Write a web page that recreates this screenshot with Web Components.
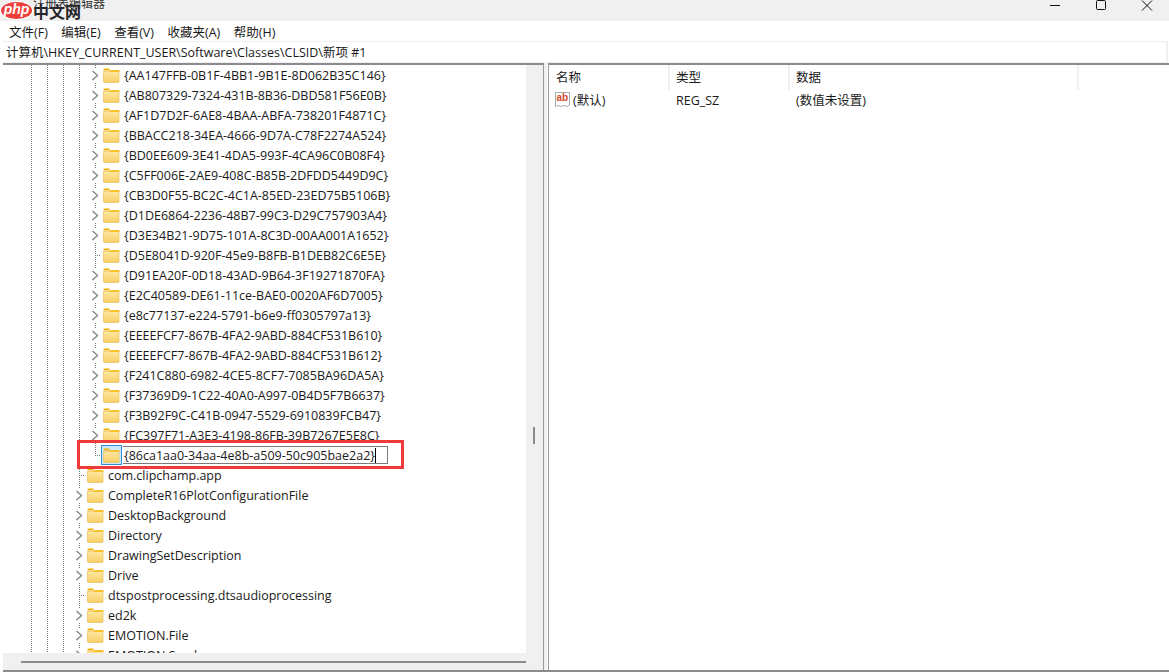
<!DOCTYPE html>
<html>
<head>
<meta charset="utf-8">
<title>注册表编辑器</title>
<style>
  html, body { margin: 0; height: 100%; background: #fff; overflow: hidden; }
  body { font-family: "Open Sans", "Noto Sans CJK SC", sans-serif; font-size: 12.5px; color: #1a1a1a; }
</style>
</head>
<body>
<reg-window>
  <reg-titlebar slot="title"></reg-titlebar>
  <reg-menu slot="menu"></reg-menu>
  <reg-address slot="address" value="计算机\HKEY_CURRENT_USER\Software\Classes\CLSID\新项 #1"></reg-address>
  <reg-tree slot="tree"></reg-tree>
  <reg-values slot="values"></reg-values>
</reg-window>

<script>
const FONT = '"Open Sans", "Noto Sans CJK SC", sans-serif';

class RegWindow extends HTMLElement {
  connectedCallback() {
    this.attachShadow({ mode: 'open' });
    this.shadowRoot.innerHTML = `
      <style>
        :host { display: flex; flex-direction: column; width: 1169px; height: 672px; box-sizing: border-box; font-family: ${FONT}; }
        .panes { display: flex; flex: 1; min-height: 0; margin-left: 3px; border-bottom: 2px solid #8b8b90; }
        .left { width: 540px; flex: none; display: flex; border-top: 2px solid #8b8b90; min-height: 0; }
        .split { width: 4px; flex: none; box-sizing: border-box; border-left: 1px solid #9a9aa0; background: #f0f0f0; }
        .right { flex: 1; display: flex; border-top: 2px solid #8b8b90; border-left: 1px solid #9a9aa0; min-width: 0; margin-left: 1px; }
        ::slotted([slot=tree]), ::slotted([slot=values]) { flex: 1; min-width: 0; }
      </style>
      <slot name="title"></slot>
      <slot name="menu"></slot>
      <slot name="address"></slot>
      <div class="panes">
        <div class="left"><slot name="tree"></slot></div>
        <div class="split"></div>
        <div class="right"><slot name="values"></slot></div>
      </div>`;
  }
}

class RegTitlebar extends HTMLElement {
  connectedCallback() {
    this.attachShadow({ mode: 'open' });
    this.shadowRoot.innerHTML = `
      <style>
        :host { display: flex; position: relative; height: 21px; background: #f0f0f0; overflow: hidden; align-items: flex-start; justify-content: flex-end; }
        .name { position: absolute; left: 33px; top: -6px; font-size: 12px; color: #333; white-space: nowrap; }
        .logo { position: absolute; left: 1px; top: 2px; width: 31px; height: 17px; background: #ee3f3c; border-radius: 50%; color: #fff; font: italic 700 14px/15px "Liberation Sans", sans-serif; text-align: center; box-shadow: 0 0 0 1px #fff; }
        .cn { position: absolute; left: 33px; top: 1px; font: 700 16px/20px "Noto Sans CJK SC", sans-serif; color: #26262a; white-space: nowrap; }
        .btn { width: 46px; height: 11px; display: flex; justify-content: center; }
        svg { display: block; }
      </style>
      <span class="name">注册表编辑器</span>
      <span class="cn">中文网</span>
      <span class="logo">php</span>
      <div class="btn"><svg width="12" height="11" viewBox="0 0 12 11"><path d="M1 5.500h10" stroke="#111" fill="none"/></svg></div>
      <div class="btn"><svg width="12" height="11" viewBox="0 0 12 11"><rect x="1.500" y="0.500" width="9" height="9" rx="1" stroke="#111" fill="none"/></svg></div>
      <div class="btn" style="margin-right:-1px"><svg width="12" height="11" viewBox="0 0 12 11"><path d="M1 .5l10 10M11 .5l-10 10" stroke="#111" fill="none"/></svg></div>`;
  }
}

class RegMenu extends HTMLElement {
  connectedCallback() {
    this.attachShadow({ mode: 'open' });
    const items = ['文件(F)', '编辑(E)', '查看(V)', '收藏夹(A)', '帮助(H)'];
    this.shadowRoot.innerHTML = `
      <style>
        :host { display: flex; height: 20px; background: #fff; align-items: center; padding-left: 9px; gap: 13.5px; font-size: 12.5px; color: #1a1a1a; }
        span { white-space: nowrap; }
      </style>
      ${items.map(i => `<span>${i}</span>`).join('')}`;
  }
}

class RegAddress extends HTMLElement {
  connectedCallback() {
    this.attachShadow({ mode: 'open' });
    this.shadowRoot.innerHTML = `
      <style>
        :host { display: flex; height: 22px; box-sizing: border-box; margin: 0 1px 0 3px; background: #fff; border: 1px solid #f0f0f0; border-width: 1px 2px 1px 0; align-items: center; padding: 0 0 2px 3px; font-size: 12.5px; color: #1a1a1a; white-space: nowrap; }
      </style>
      ${this.getAttribute('value')}`;
  }
}

const FOLDER = `<svg width="17" height="16" viewBox="0 0 17 16">
  <defs><linearGradient id="body" x1="0" y1="0" x2="0" y2="1"><stop offset="0" stop-color="#fde7a4"/><stop offset="1" stop-color="#f9cf63"/></linearGradient></defs>
  <path d="M0.500 2.500q0-1 1-1h4.500l1.500 2h-7z" fill="#f5b30a"/>
  <path d="M.5 4.500h15.500v10q0 1-1 1H1.500q-1 0-1-1z" fill="url(#body)" stroke="#eab843" stroke-width=".6"/>
  <path d="M7.500 3h8.500q.5 0 .5 .8v1.200H6.500z" fill="#f7c02c"/>
</svg>`;

class RegRow extends HTMLElement {
  connectedCallback() {
    this.attachShadow({ mode: 'open' });
    const deep = this.hasAttribute('deep');
    const leaf = this.hasAttribute('leaf');
    const editing = this.hasAttribute('editing');
    // dotted tree guides, as the Win32 tree control paints them
    const guides = deep ? [31, 47, 63, 79, 95] : [31, 47, 63, 79];
    const lineEnd = this.hasAttribute('last');
    const dot = 'repeating-linear-gradient(to bottom,#777 0 1px,transparent 1px 2px)';
    const bgs = guides.map(x => `${dot} ${x - 3}px 0 / 1px ${lineEnd && x === 95 ? '11px' : '100%'} no-repeat`).join(',');
    const hdot = 'repeating-linear-gradient(to right,#777 0 1px,transparent 1px 2px)';
    const stub = guides[guides.length - 1] - 3;
    this.shadowRoot.innerHTML = `
      <style>
        :host { display: flex; height: 20px; flex: none; align-items: center; white-space: nowrap; background: ${bgs}; padding-left: ${stub - 5}px; font-size: 12.5px; color: #1a1a1a; }
        .exp { width: 11px; height: 13px; flex: none; background: #fff; display: flex; }
        .stub { width: 11px; height: 1px; flex: none; background: ${hdot}; background-position: 5px 0; background-repeat: no-repeat; }
        .ico { margin-left: 2px; width: 17px; height: 16px; flex: none; }
        .ico.sel { outline: 1px solid #2f8fd8; outline-offset: 1px; background: #cce8ff; box-shadow: 0 0 0 1px #cce8ff; }
        .t { margin-left: 4px; }
        .t.edit { margin-left: 3px; padding-left: 1px; padding-right: 11px; height: 18px; line-height: 17px; box-sizing: border-box; border: 1px solid #7a7a7a; border-left: 0; }
        .caret { display: inline-block; width: 1px; height: 15px; background: #000; vertical-align: -3px; }
        svg { display: block; }
      </style>
      ${leaf
        ? '<span class="stub"></span>'
        : '<span class="exp"><svg width="11" height="13" viewBox="0 0 11 13"><path d="M2.500 2l5 4.500-5 4.500" stroke="#8a8a8a" stroke-width="1.500" fill="none"/></svg></span>'}
      <span class="ico${editing ? ' sel' : ''}">${FOLDER}</span>
      <span class="t${editing ? ' edit' : ''}"><slot></slot>${editing ? '<i class="caret"></i>' : ''}</span>`;
  }
}

class RegTree extends HTMLElement {
  connectedCallback() {
    this.attachShadow({ mode: 'open' });
    const deep = [
      '{AA147FFB-0B1F-4BB1-9B1E-8D062B35C146}', '{AB807329-7324-431B-8B36-DBD581F56E0B}',
      '{AF1D7D2F-6AE8-4BAA-ABFA-738201F4871C}', '{BBACC218-34EA-4666-9D7A-C78F2274A524}',
      '{BD0EE609-3E41-4DA5-993F-4CA96C0B08F4}', '{C5FF006E-2AE9-408C-B85B-2DFDD5449D9C}',
      '{CB3D0F55-BC2C-4C1A-85ED-23ED75B5106B}', '{D1DE6864-2236-48B7-99C3-D29C757903A4}',
      '{D3E34B21-9D75-101A-8C3D-00AA001A1652}', '*{D5E8041D-920F-45e9-B8FB-B1DEB82C6E5E}',
      '{D91EA20F-0D18-43AD-9B64-3F19271870FA}', '{E2C40589-DE61-11ce-BAE0-0020AF6D7005}',
      '{e8c77137-e224-5791-b6e9-ff0305797a13}', '{EEEEFCF7-867B-4FA2-9ABD-884CF531B610}',
      '{EEEEFCF7-867B-4FA2-9ABD-884CF531B612}', '{F241C880-6982-4CE5-8CF7-7085BA96DA5A}',
      '{F37369D9-1C22-40A0-A997-0B4D5F7B6637}', '{F3B92F9C-C41B-0947-5529-6910839FCB47}',
      '{FC397F71-A3E3-4198-86FB-39B7267E5E8C}'
    ];
    const upper = [
      '*com.clipchamp.app', 'CompleteR16PlotConfigurationFile', 'DesktopBackground', 'Directory',
      'DrawingSetDescription', 'Drive', '*dtspostprocessing.dtsaudioprocessing', 'ed2k', 'EMOTION.File', 'EMOTION.Seed'
    ];
    const row = (s, attrs) => s[0] === '*'
      ? `<reg-row ${attrs} leaf>${s.slice(1)}</reg-row>`
      : `<reg-row ${attrs}>${s}</reg-row>`;
    this.shadowRoot.innerHTML = `
      <style>
        :host { display: grid; grid-template-columns: 1fr 17px; grid-template-rows: 1fr 17px; background: #f0f0f0; min-height: 0; }
        .view { background: #fff; overflow: hidden; min-height: 0; display: flex; flex-direction: column; }
        .vbar { display: flex; padding: 362px 0 0 7px; }
        .vbar i { display: block; width: 2px; height: 17px; background: #8b8b8b; }
        .hbar { display: flex; align-items: center; padding-left: 18px; }
        .hbar i { display: block; height: 2px; width: 100%; background: #8b8b8b; }
        .mark { outline: 3px solid #ee3a3a; position: absolute; left: 80px; top: 443px; width: 321px; height: 23px; pointer-events: none; }
      </style>
      <div class="view">
        ${deep.map(s => row(s, 'deep')).join('')}
        <reg-row deep leaf editing last>{86ca1aa0-34aa-4e8b-a509-50c905bae2a2}</reg-row>
        ${upper.map(s => row(s, '')).join('')}
      </div>
      <div class="vbar"><i></i></div>
      <div class="hbar"><i></i></div>
      <div></div>
      <div class="mark"></div>`;
  }
}

class RegValues extends HTMLElement {
  connectedCallback() {
    this.attachShadow({ mode: 'open' });
    this.shadowRoot.innerHTML = `
      <style>
        :host { display: block; background: #fff; font-size: 12.5px; color: #1a1a1a; }
        .grid { display: grid; grid-template-columns: 121px 120px 289px; }
        .h { height: 25px; display: flex; align-items: center; padding: 0 0 2px 6px; box-sizing: border-box; border-right: 2px solid #f0f0f0; }
        .h:first-child { padding-left: 7px; }
        .c { height: 20px; display: flex; align-items: center; padding-left: 6px; white-space: nowrap; box-sizing: border-box; }
        .name { padding-left: 5px; }
        .cjk { padding-bottom: 1px; }
        svg { display: block; margin-right: 2px; flex: none; }
      </style>
      <div class="grid">
        <div class="h">名称</div><div class="h">类型</div><div class="h">数据</div>
        <div class="c name cjk">
          <svg width="17" height="17" viewBox="0 0 17 17">
            <path d="M1.500 1.500h14v12.500l-3 1.500-2.500-1-3 1-2.500-1-3 1z" fill="#fff" stroke="#a9a9a9"/>
            <text x="2.500" y="10" font-family="Liberation Sans, sans-serif" font-size="10" font-weight="700" fill="#d2492a">ab</text>
          </svg>
          (默认)
        </div>
        <div class="c">REG_SZ</div>
        <div class="c cjk">(数值未设置)</div>
      </div>`;
  }
}

customElements.define('reg-window', RegWindow);
customElements.define('reg-titlebar', RegTitlebar);
customElements.define('reg-menu', RegMenu);
customElements.define('reg-address', RegAddress);
customElements.define('reg-row', RegRow);
customElements.define('reg-tree', RegTree);
customElements.define('reg-values', RegValues);
</script>
</body>
</html>
